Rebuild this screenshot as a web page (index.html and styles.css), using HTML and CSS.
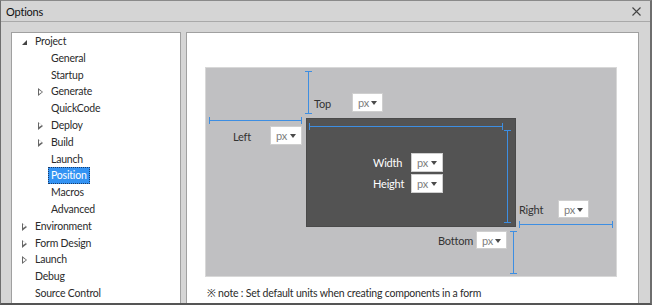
FILE: index.html
```html
<!DOCTYPE html>
<html lang="en">
<head>
    <meta charset="UTF-8">
    <title>Options</title>
    <link rel="stylesheet" href="styles.css">
</head>
<body>
    <div class="window">
        <div class="title-bar">
            <span class="title">Options</span>
            <svg class="close" width="9" height="9" viewBox="0 0 9 9">
                <path d="M0.5 0.5 L8.5 8.5 M8.5 0.5 L0.5 8.5" stroke="#444" stroke-width="1.1" fill="none"/>
            </svg>
        </div>

        <div class="content">
            <ul class="tree">
                <li class="node open"><span class="arrow"></span>Project</li>
                <li class="child">General</li>
                <li class="child">Startup</li>
                <li class="child closed"><span class="arrow"></span>Generate</li>
                <li class="child">QuickCode</li>
                <li class="child closed"><span class="arrow"></span>Deploy</li>
                <li class="child closed"><span class="arrow"></span>Build</li>
                <li class="child">Launch</li>
                <li class="child"><span class="selected">Position</span></li>
                <li class="child">Macros</li>
                <li class="child">Advanced</li>
                <li class="node closed"><span class="arrow"></span>Environment</li>
                <li class="node closed"><span class="arrow"></span>Form Design</li>
                <li class="node closed"><span class="arrow"></span>Launch</li>
                <li class="node">Debug</li>
                <li class="node">Source Control</li>
            </ul>

            <div class="panel">
                <div class="canvas">
                    <div class="box"></div>

                    <svg class="measures" width="412" height="210">
                        <g stroke="#3d8ee2" stroke-width="1" fill="none">
                            <!-- top -->
                            <line x1="103.5" y1="4" x2="103.5" y2="47"/>
                            <line x1="100" y1="4.5" x2="107" y2="4.5"/>
                            <line x1="100" y1="46.5" x2="107" y2="46.5"/>
                            <!-- left -->
                            <line x1="4" y1="53.5" x2="97" y2="53.5"/>
                            <line x1="4.5" y1="50" x2="4.5" y2="57"/>
                            <line x1="96.5" y1="50" x2="96.5" y2="57"/>
                            <!-- width -->
                            <line x1="104" y1="59.5" x2="298" y2="59.5"/>
                            <line x1="104.5" y1="56" x2="104.5" y2="63"/>
                            <line x1="297.5" y1="56" x2="297.5" y2="63"/>
                            <!-- height -->
                            <line x1="302.5" y1="63" x2="302.5" y2="156"/>
                            <line x1="299" y1="63.5" x2="306" y2="63.5"/>
                            <line x1="299" y1="155.5" x2="306" y2="155.5"/>
                            <!-- right -->
                            <line x1="314" y1="157.5" x2="408" y2="157.5"/>
                            <line x1="314.5" y1="154" x2="314.5" y2="161"/>
                            <line x1="407.5" y1="154" x2="407.5" y2="161"/>
                            <!-- bottom -->
                            <line x1="308.5" y1="164" x2="308.5" y2="207"/>
                            <line x1="305" y1="164.5" x2="312" y2="164.5"/>
                            <line x1="305" y1="206.5" x2="312" y2="206.5"/>
                        </g>
                    </svg>

                    <span class="label label-top">Top</span>
                    <div class="unit unit-top">px<span class="caret"></span></div>

                    <span class="label label-left">Left</span>
                    <div class="unit unit-left">px<span class="caret"></span></div>

                    <span class="label label-width">Width</span>
                    <div class="unit unit-width">px<span class="caret"></span></div>

                    <span class="label label-height">Height</span>
                    <div class="unit unit-height">px<span class="caret"></span></div>

                    <span class="label label-right">Right</span>
                    <div class="unit unit-right">px<span class="caret"></span></div>

                    <span class="label label-bottom">Bottom</span>
                    <div class="unit unit-bottom">px<span class="caret"></span></div>
                </div>

                <p class="note">&#x203B; note : Set default units when creating components in a form</p>
            </div>
        </div>
    </div>
</body>
</html>
```

FILE: styles.css
```css
* {
    margin: 0;
    padding: 0;
    box-sizing: border-box;
}

body {
    font-family: Lato, "Noto Sans", sans-serif;
    font-size: 10.5px;
    letter-spacing: -0.2px;
    color: #2b2b2b;
    background: #fff;
}

.window {
    width: 652px;
    height: 305px;
    display: flex;
    flex-direction: column;
    background: #d5d5d5;
    border-top: 1px solid #8a8a8a;
    border-left: 1px solid #6e6e6e;
    border-right: 2px solid #6e6e6e;
    border-bottom: 2px solid #555;
    overflow: hidden;
}

.title-bar {
    height: 21px;
    flex: none;
    display: flex;
    align-items: center;
    justify-content: space-between;
    padding: 0 9px 0 5px;
    border-bottom: 1px solid #a9a9a9;
}

.title {
    font-size: 11px;
    color: #111;
}

.close {
    display: block;
}

.content {
    flex: 1;
    min-height: 0;
    display: flex;
    gap: 5px;
    padding: 10px 11px 0 10px;
}

/* tree */

.tree {
    list-style: none;
    width: 170px;
    flex: none;
    background: #fff;
    border: 1px solid #a0a0a0;
    border-bottom: none;
}

.tree li {
    position: relative;
    height: 16.8px;
    line-height: 16.8px;
    white-space: nowrap;
    color: #2b2b2b;
}

.tree .node {
    padding-left: 23px;
}

.tree .child {
    padding-left: 39px;
}

.tree .arrow {
    position: absolute;
    top: 5px;
    width: 0;
    height: 0;
}

.tree .node .arrow {
    left: 10px;
}

.tree .child .arrow {
    left: 26px;
}

.tree .closed .arrow {
    border-top: 4px solid transparent;
    border-bottom: 4px solid transparent;
    border-left: 5px solid #666;
}

.tree .closed .arrow::after {
    content: "";
    position: absolute;
    left: -4px;
    top: -2.5px;
    border-top: 2.5px solid transparent;
    border-bottom: 2.5px solid transparent;
    border-left: 3px solid #fff;
}

.tree .open .arrow {
    top: 7px;
    border-left: 5px solid transparent;
    border-bottom: 5px solid #444;
}

.selected {
    display: inline-block;
    margin-left: -3px;
    padding: 0 3px;
    height: 16.8px;
    background: #3393f3;
    color: #fff;
    outline: 1px dotted #1a3c6b;
    outline-offset: -1px;
}

/* panel */

.panel {
    flex: 1;
    background: #fff;
    border: 1px solid #a0a0a0;
    border-bottom: none;
    padding: 34px 0 0 18px;
}

.canvas {
    position: relative;
    width: 412px;
    height: 210px;
    background: #c0c0c2;
    border: 1px solid #d8d8d8;
}

.box {
    position: absolute;
    left: 100px;
    top: 50px;
    width: 210px;
    height: 109px;
    background: #535353;
    border: 1px solid #4a4a4a;
}

.measures {
    position: absolute;
    left: -1px;
    top: -1px;
}

.label {
    position: absolute;
    line-height: 16px;
    font-size: 11px;
    color: #333;
}

.label-top { left: 108px; top: 28px; }
.label-left { left: 27px; top: 61px; }
.label-width { left: 167px; top: 87px; color: #fff; }
.label-height { left: 167px; top: 108px; color: #fff; }
.label-right { left: 313px; top: 134px; }
.label-bottom { left: 232px; top: 165px; }

.unit {
    position: absolute;
    width: 31px;
    height: 19px;
    padding-left: 5px;
    line-height: 17px;
    font-size: 11px;
    color: #7d7d7d;
    background: #fff;
    border: 1px solid #cfcfcf;
}

.caret {
    position: absolute;
    right: 5px;
    top: 7px;
    border-left: 3.5px solid transparent;
    border-right: 3.5px solid transparent;
    border-top: 4px solid #4a4a4a;
}

.unit-top { left: 146px; top: 25px; }
.unit-left { left: 64px; top: 58px; width: 32px; }
.unit-width { left: 205px; top: 85px; width: 32px; }
.unit-height { left: 205px; top: 106px; width: 32px; }
.unit-right { left: 352px; top: 132px; height: 18px; }
.unit-bottom { left: 270px; top: 163px; height: 18px; }

.note {
    margin-top: 8px;
    padding-left: 2px;
    line-height: 16px;
    color: #2b2b2b;
}
```
